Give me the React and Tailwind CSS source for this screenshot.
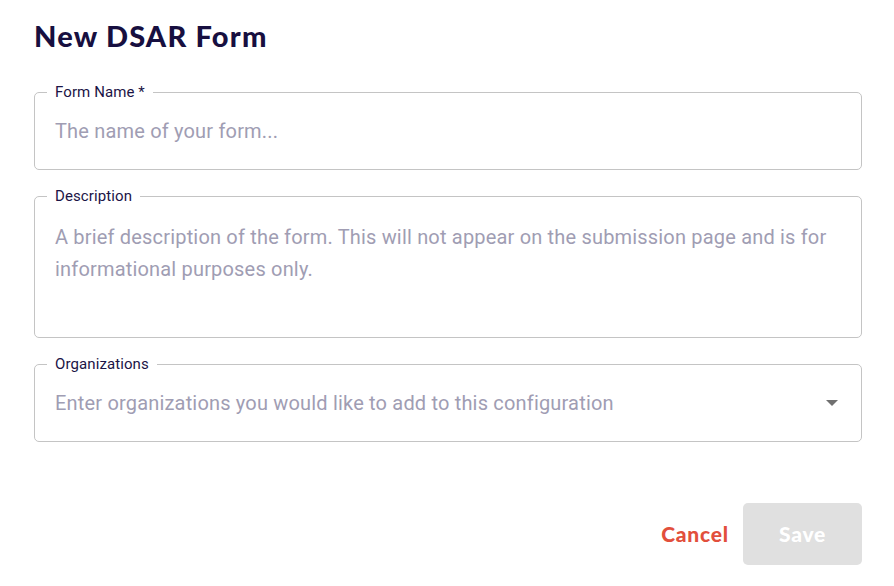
import React from "react";

function Field({ label, height, children, className = "" }) {
  return (
    <div
      className={`relative rounded-[5px] border border-[#c4c4c4] ${className}`}
      style={{ height }}
    >
      <span className="absolute left-[12px] -top-[10px] bg-white px-[8px] text-[15px] leading-[18px] tracking-[0.1px] text-[#1b1446]">
        {label}
      </span>
      {children}
    </div>
  );
}

export default function App() {
  return (
    <div
      className="w-[894px] h-[586px] bg-white pl-[34px] pr-[32px] pt-[18px]"
      style={{ fontFamily: "Roboto, 'Liberation Sans', sans-serif" }}
    >
      <h1
        className="text-[29px] leading-[36px] font-black text-[#170f40] tracking-[1.2px]"
        style={{ fontFamily: "Lato, 'Noto Sans', sans-serif" }}
      >
        New DSAR Form
      </h1>
      <div className="mt-[38px] flex flex-col gap-[26px]">
        <Field label="Form Name *" height={78}>
          <div className="flex h-full items-center pl-[20px] text-[20px] tracking-[0.18px] text-[#a09db3]">
            The name of your form...
          </div>
        </Field>
        <Field label="Description" height={142}>
          <div className="pl-[20px] pr-[20px] pt-[24px] text-[20px] leading-[32px] tracking-[0.18px] text-[#a09db3]">
            A brief description of the form. This will not appear on the submission page and is for informational purposes only.
          </div>
        </Field>
        <Field label="Organizations" height={78}>
          <div className="flex h-full items-center justify-between pl-[20px] pr-[22px] text-[20px] tracking-[0.18px] text-[#a09db3]">
            <span>Enter organizations you would like to add to this configuration</span>
            <svg width="14" height="8" viewBox="0 0 14 8">
              <path d="M1 1 L13 1 L7 7 Z" fill="#707070" />
            </svg>
          </div>
        </Field>
      </div>
      <div className="mt-[61px] flex items-center justify-end gap-[14px]">
        <button
          className="h-[62px] px-[0px] text-[21px] font-black text-[#e24f3c] tracking-[0.8px]"
          style={{ fontFamily: "Lato, 'Noto Sans', sans-serif" }}
        >
          Cancel
        </button>
        <button
          className="h-[62px] w-[119px] rounded-[5px] bg-[#e0e0e0] text-[21px] font-black text-white tracking-[0.8px]"
          style={{ fontFamily: "Lato, 'Noto Sans', sans-serif" }}
        >
          Save
        </button>
      </div>
    </div>
  );
}
